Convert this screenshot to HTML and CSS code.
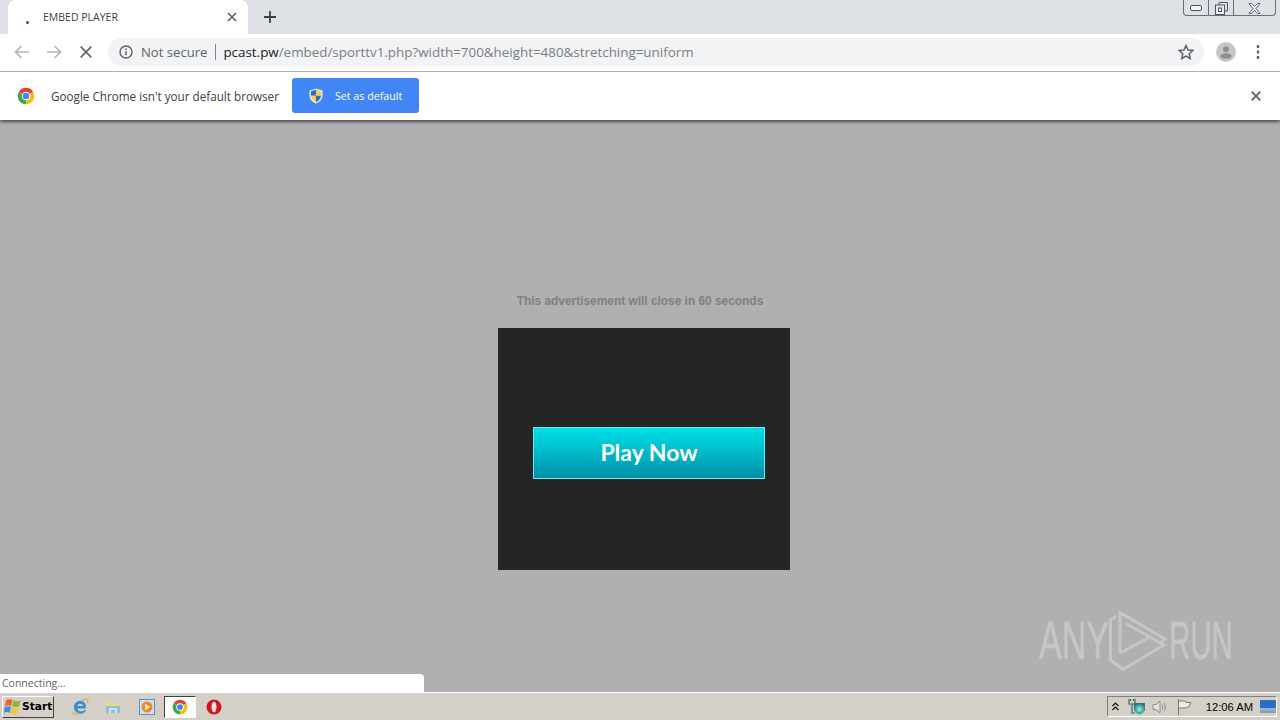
FILE: index.html
```html
<!DOCTYPE html>
<html lang="en">
  <head>
    <meta charset="UTF-8" />
    <title>EMBED PLAYER</title>
    <link rel="stylesheet" href="styles.css">
  </head>

  <body>
    <header class="tabstrip">
      <div class="tab">
        <span class="tab-favicon"></span>
        <span class="tab-title">EMBED PLAYER</span>
        <svg class="tab-close" width="10" height="10" viewBox="0 0 10 10"><path d="M1 1l8 8M9 1l-8 8" stroke="#5f6368" stroke-width="1.7" fill="none"/></svg>
      </div>
      <svg class="new-tab" width="12" height="12" viewBox="0 0 12 12"><path d="M6 0v12M0 6h12" stroke="#3c4043" stroke-width="1.8" fill="none"/></svg>
      <div class="window-controls">
        <span class="win-btn win-min"><svg width="12" height="7" viewBox="0 0 12 7"><rect x="0.5" y="0.5" width="11" height="5" rx="1.5" fill="#f2f4f7" stroke="#4d5660"/></svg></span>
        <span class="win-btn win-max"><svg width="13" height="13" viewBox="0 0 13 13"><path d="M4 3V.5h8.500v8.500H10" fill="none" stroke="#4d5660"/><rect x="0.500" y="3" width="9" height="9.500" fill="#e8ebef" stroke="#4d5660"/><rect x="3.500" y="6" width="3" height="3.500" fill="none" stroke="#4d5660"/></svg></span>
        <span class="win-btn win-close"><svg width="13" height="11" viewBox="0 0 13 11"><path d="M1 .5h2.500l3 3 3-3H12L8 5.500l4 5H9.500l-3-3.300-3 3.300H1l4-5z" fill="#f2f4f7" stroke="#4d5660" stroke-width=".9"/></svg></span>
      </div>
    </header>

    <nav class="toolbar">
      <svg class="nav-icon" width="16" height="14" viewBox="0 0 16 14"><path d="M15 7H2M7.500 1L1.500 7l6 6" stroke="#b4b6b9" stroke-width="1.700" fill="none"/></svg>
      <svg class="nav-icon" width="16" height="14" viewBox="0 0 16 14"><path d="M1 7h13M8.500 1l6 6-6 6" stroke="#b4b6b9" stroke-width="1.700" fill="none"/></svg>
      <svg class="nav-icon" width="12" height="12" viewBox="0 0 12 12"><path d="M.7.700l10.600 10.600M11.300.700L.7 11.300" stroke="#5f6368" stroke-width="1.700" fill="none"/></svg>
      <div class="omnibox">
        <svg width="14" height="14" viewBox="0 0 14 14"><circle cx="7" cy="7" r="6" fill="none" stroke="#5f6368" stroke-width="1.400"/><path d="M7 6.200v4M7 3.500v1.500" stroke="#5f6368" stroke-width="1.500"/></svg>
        <span class="not-secure">Not secure</span>
        <span class="omni-divider"></span>
        <span class="url"><b>pcast.pw</b>/embed/sporttv1.php?width=700&amp;height=480&amp;stretching=uniform</span>
        <svg class="star" width="16" height="16" viewBox="0 0 16 16"><path d="M8 1.500l2 4.500 4.800.5-3.600 3.200 1 4.800L8 12l-4.200 2.500 1-4.800L1.200 6.500 6 6z" fill="none" stroke="#5f6368" stroke-width="1.500"/></svg>
      </div>
      <svg class="avatar" width="20" height="20" viewBox="0 0 20 20"><circle cx="10" cy="10" r="10" fill="#c6c6c6"/><circle cx="10" cy="7.200" r="3" fill="#8e8e8e"/><ellipse cx="10" cy="14" rx="5.800" ry="2.800" fill="#8e8e8e"/></svg>
      <svg class="menu-dots" width="4" height="14" viewBox="0 0 4 14"><path d="M2 0v3M2 5.500v3M2 11v3" stroke="#5f6368" stroke-width="2.400" fill="none"/></svg>
    </nav>

    <div class="infobar">
      <svg class="chrome-icon" width="18" height="18" viewBox="0 0 24 24">
        <path d="M12 12L2.470 6.500A11 11 0 0 1 21.530 6.500Z" fill="#dc4437"/>
        <path d="M12 12L21.530 6.500A11 11 0 0 1 12 23Z" fill="#f4c20d"/>
        <path d="M12 12L12 23A11 11 0 0 1 2.470 6.500Z" fill="#3fa757"/>
        <circle cx="12" cy="12" r="5.600" fill="#fff"/>
        <circle cx="12" cy="12" r="4.300" fill="#4285f4"/>
      </svg>
      <span class="infobar-text">Google Chrome isn't your default browser</span>
      <button class="set-default">
        <svg width="14" height="16" viewBox="0 0 14 16">
          <path d="M7 .5l6.500 2v5c0 4-3 6.700-6.500 8-3.500-1.300-6.500-4-6.500-8v-5z" fill="#dfe6ef"/>
          <path d="M7 1.800v6H2V3.300z" fill="#2f69c9"/>
          <path d="M7 1.800l5 1.500v4.500H7z" fill="#f5d33a"/>
          <path d="M2 7.800h5v6.300C4.500 13 2.300 10.800 2 7.800z" fill="#f5d33a"/>
          <path d="M7 7.800h5c-.3 3-2.500 5.200-5 6.300z" fill="#2f69c9"/>
        </svg>
        <span>Set as default</span>
      </button>
      <svg class="infobar-close" width="10" height="10" viewBox="0 0 10 10"><path d="M.7.700l8.600 8.600M9.300.700L.7 9.300" stroke="#5f6368" stroke-width="1.800" fill="none"/></svg>
    </div>

    <main class="page">
      <p class="ad-note">This advertisement will close in 60 seconds</p>
      <div class="ad">
        <a class="play-now">Play Now</a>
      </div>

      <div class="status-bubble">Connecting...</div>

      <div class="watermark">
        <span class="wm-word wm-any">ANY</span>
        <svg class="wm-logo" width="58" height="61" viewBox="0 0 58 61" fill="none" stroke="#c6c6c6" stroke-width="3">
          <path d="M7 6L1.500 10V50L12 58"/>
          <path d="M11 43V2.500L56 29 52 32"/>
          <path d="M11 43L41 27"/>
          <path d="M17 13.500L55 35 14 59.500 10 56"/>
        </svg>
        <span class="wm-word wm-run">RUN</span>
      </div>
    </main>

    <footer class="taskbar">
      <button class="start-btn">
        <svg width="17" height="17" viewBox="0 0 17 17">
          <path d="M2 2.500C4 .8 6.500.8 8.500 2L7.300 8C5.300 6.800 3 6.800.8 8.300z" fill="#e8662a"/>
          <path d="M9.500 2.300c2 1.200 4.300 1.200 6.700.2L15 8.200c-2.300 1.200-4.600 1.200-6.700 0z" fill="#86b83c"/>
          <path d="M.6 9.300C3 7.800 5.200 7.800 7 9l-1.200 6C4 13.800 1.800 13.800 0 15z" fill="#3c8fdc"/>
          <path d="M8 9.200c2.200 1.200 4.500 1.200 6.800 0l-1.200 5.800c-2.300 1.200-4.600 1.200-6.800 0z" fill="#f7c52c"/>
        </svg>
        <span>Start</span>
      </button>
      <div class="quicklaunch">
        <svg width="18" height="18" viewBox="0 0 18 18">
          <path d="M14.500 10.500H6.500c.2 3 4.500 4 6.500 1.500h2c-1.500 4-7 5-10 2-3-3-2.500-8 .5-10 3.500-2.500 8.500-1 9.500 3.500zM6.500 8h5.500C11.500 5 7 5 6.500 8z" fill="#2f8fdc"/>
          <path d="M3 13.500C.5 17 3.500 17.500 8 15M11 3c4-2.800 7-2.500 5.500 2" fill="none" stroke="#e0b23a" stroke-width="1.300"/>
        </svg>
        <svg width="16" height="16" viewBox="1 0 16 16">
          <path d="M1 3h5l1 2h7v9H1z" fill="#efd884"/>
          <path d="M1 7h14v7H1z" fill="#8ec1d8"/>
          <path d="M5 14v-4h6v4" fill="none" stroke="#e9f2f6" stroke-width="1.500"/>
        </svg>
        <svg width="16" height="16" viewBox="0 0 16 16">
          <rect x=".5" y=".5" width="15" height="15" fill="#cfe0f4" stroke="#5d8cc9"/>
          <circle cx="8" cy="8" r="5.500" fill="#f08c1e"/>
          <path d="M6.300 5v6L11 8z" fill="#fff"/>
        </svg>
        <span class="task-active">
          <svg width="16" height="16" viewBox="0 0 24 24">
            <path d="M12 12L2.470 6.500A11 11 0 0 1 21.530 6.500Z" fill="#dc4437"/>
            <path d="M12 12L21.530 6.500A11 11 0 0 1 12 23Z" fill="#f4c20d"/>
            <path d="M12 12L12 23A11 11 0 0 1 2.470 6.500Z" fill="#3fa757"/>
            <circle cx="12" cy="12" r="5.600" fill="#fff"/>
            <circle cx="12" cy="12" r="4.300" fill="#4285f4"/>
          </svg>
        </span>
        <svg width="16" height="16" viewBox="0 0 16 16">
          <circle cx="8" cy="8" r="7.500" fill="#c8181f"/>
          <ellipse cx="8" cy="8" rx="2.500" ry="5.400" fill="#f6dede"/>
        </svg>
      </div>
      <div class="tray">
        <svg width="7" height="9" viewBox="0 0 7 9"><path d="M.5 4l3-3 3 3M.5 8l3-3 3 3" fill="none" stroke="#111" stroke-width="1.200"/></svg>
        <svg class="tray-net" width="18" height="18" viewBox="0 0 18 18">
          <path d="M1 1v5h6V1M2.500 1v2M5.500 1v2M4 6v9h3" fill="none" stroke="#3f6b52" stroke-width="1.200"/>
          <rect x="6" y="5" width="11" height="8" fill="#3a6f7c"/>
          <circle cx="11.500" cy="11.500" r="5" fill="#3fb3a8"/>
          <circle cx="11.500" cy="11.500" r="2.500" fill="#86d8cd"/>
        </svg>
        <svg class="tray-vol" width="16" height="16" viewBox="0 0 16 16" fill="none" stroke="#8d8d8d">
          <path d="M1 5.500h3L8 2v12L4 10.500H1z" fill="#e2e2e2"/>
          <path d="M10 5.500c1 1.500 1 3.500 0 5M12 4c1.800 2.500 1.800 5.500 0 8"/>
        </svg>
        <svg class="tray-flag" width="15" height="16" viewBox="0 0 15 16" fill="none" stroke="#777"><path d="M1.500 0v16M2 2h6l1 1.500h5L11.500 8 8 9H2" fill="#eeece6"/></svg>
        <span class="clock">12:06 AM</span>
        <svg width="16" height="13" viewBox="0 0 16 13"><rect width="16" height="11" fill="#2b6fc4"/><rect y="8" width="16" height="3" fill="#86b4e4"/><rect y="11" width="16" height="2" fill="#9a9a9a"/></svg>
      </div>
    </footer>
  </body>
</html>
```

FILE: styles.css
```css
* {
  margin: 0;
  padding: 0;
  box-sizing: border-box;
}

body {
  height: 720px;
  width: 1280px;
  overflow: hidden;
  display: flex;
  flex-direction: column;
  font-family: "Open Sans", sans-serif;
  background-color: #b0b0b0;
}

.tabstrip {
  height: 34px;
  display: flex;
  align-items: flex-start;
  background-color: #dee1e6;
  padding-left: 8px;
}

.tab {
  position: relative;
  width: 240px;
  height: 34px;
  display: flex;
  align-items: center;
  background-color: white;
  border-radius: 8px 8px 0 0;
  padding: 0 11px 0 35px;
}

.tab-favicon {
  position: absolute;
  left: 18px;
  top: 21px;
  width: 3px;
  height: 3px;
  border-radius: 50%;
  background-color: #2a4f9c;
}

.tab-title {
  flex: 1;
  font-size: 10.500px;
  color: #3c4043;
}

.new-tab {
  margin: 11px 0 0 16px;
}

.window-controls {
  margin-left: auto;
  margin-right: 4px;
  width: 93px;
  height: 16px;
  display: flex;
  border: 1px solid #66707a;
  border-top: 0;
  border-radius: 0 0 4px 4px;
}

.win-btn {
  display: flex;
  align-items: center;
  justify-content: center;
  border-right: 1px solid #66707a;
}

.win-btn svg {
  margin-top: 1px;
}

.win-min {
  width: 25px;
}

.win-max {
  width: 25px;
}

.win-close {
  flex: 1;
  border-right: 0;
}

.toolbar {
  height: 38px;
  display: flex;
  align-items: center;
  background-color: white;
  border-bottom: 1px solid #b4b4b4;
  padding: 0 0 1px 14px;
}

.nav-icon {
  margin-right: 16px;
}

.nav-icon:nth-child(3) {
  margin: 0 16px 0 2px;
}

.omnibox {
  width: 1096px;
  height: 28px;
  display: flex;
  align-items: center;
  padding: 0 10px 0 11px;
  border-radius: 14px;
  background-color: #f1f3f4;
}

.not-secure {
  margin-left: 8px;
  font-size: 13.100px;
  color: #5f6368;
}

.omni-divider {
  width: 1px;
  height: 16px;
  margin: 0 7px 0 8px;
  background-color: #80868b;
}

.url {
  flex: 1;
  font-size: 13.400px;
  color: #7a7e83;
}

.url b {
  font-weight: 400;
  color: #202124;
}

.avatar {
  margin-left: 12px;
}

.menu-dots {
  margin-left: 20px;
}

.infobar {
  position: relative;
  z-index: 2;
  height: 48px;
  display: flex;
  align-items: center;
  background-color: white;
  padding-left: 17px;
  box-shadow: 0 2px 3px rgba(0, 0, 0, 0.55);
}

.infobar-text {
  margin: 0 0 1px 16px;
  font-size: 11.700px;
  color: #3c4043;
}

.set-default {
  width: 127px;
  height: 35px;
  display: flex;
  align-items: center;
  gap: 12px;
  margin: 0 0 1px 13px;
  padding-left: 17px;
  border: 0;
  border-radius: 3px;
  background-color: #4285f4;
  color: white;
  font-family: inherit;
  font-size: 10.700px;
}

.infobar-close {
  margin-left: auto;
  margin-right: 19px;
}

.page {
  position: relative;
  flex: 1;
  padding-top: 174px;
  background-color: #b0b0b0;
}

.ad-note {
  height: 14px;
  line-height: 14px;
  text-align: center;
  font-family: "Liberation Sans", sans-serif;
  font-size: 11.900px;
  font-weight: bold;
  color: #808080;
}

.ad {
  width: 292px;
  height: 242px;
  margin: 20px 0 0 498px;
  padding: 8px 0 0 35px;
  display: flex;
  align-items: center;
  background-color: #252525;
}

.play-now {
  width: 232px;
  height: 52px;
  display: flex;
  align-items: center;
  justify-content: center;
  padding-bottom: 3px;
  border: 1px solid #5ff0f5;
  background-image: linear-gradient(to bottom, #00e0e8, #0090a8);
  color: white;
  font-family: "Lato", sans-serif;
  font-size: 23px;
  font-weight: bold;
}

.status-bubble {
  position: absolute;
  left: 0;
  bottom: 0;
  width: 424px;
  height: 18px;
  padding-left: 2px;
  line-height: 18px;
  font-size: 10.500px;
  color: #5f6368;
  background-color: white;
  border-top-right-radius: 4px;
}

.watermark {
  position: absolute;
  left: 1039px;
  top: 490px;
  display: flex;
  align-items: center;
  gap: 8px;
}

.wm-word {
  width: 62px;
  font-family: "Liberation Sans", sans-serif;
  font-size: 54px;
  line-height: 61px;
  color: #c6c6c6;
  -webkit-text-stroke: 0.6px #c6c6c6;
  transform-origin: left center;
  white-space: nowrap;
}

.wm-any {
  transform: scaleX(0.63);
}

.wm-run {
  margin-left: -6px;
  transform: scaleX(0.545);
}

.taskbar {
  height: 28px;
  display: flex;
  align-items: center;
  background-color: #d4d0c8;
  border-top: 1px solid white;
  padding-left: 2px;
}

.start-btn {
  width: 52px;
  height: 22px;
  display: flex;
  align-items: center;
  gap: 1px;
  padding-left: 1px;
  border: 1px solid;
  border-color: white #404040 #404040 white;
  background-color: #d4d0c8;
  font-family: "DejaVu Sans", sans-serif;
  font-size: 10.700px;
  font-weight: bold;
  color: black;
}

.quicklaunch {
  display: flex;
  align-items: center;
  gap: 17px;
  margin-left: 17px;
}

.task-active {
  width: 32px;
  height: 22px;
  display: flex;
  align-items: center;
  justify-content: center;
  margin: 0 -7px 0 -8px;
  background-color: white;
  border: 1px solid;
  border-color: #404040 white white #404040;
}

.tray {
  width: 170px;
  height: 21px;
  margin-left: auto;
  margin-right: 3px;
  display: flex;
  align-items: center;
  gap: 8px;
  padding-left: 4px;
  border: 1px solid;
  border-color: #808080 white white #808080;
}

.tray-net {
  margin-left: 1px;
}

.tray-vol {
  margin-left: -2px;
}

.tray-flag {
  margin-left: 1px;
}

.clock {
  margin: 0 -1px 0 6px;
  font-family: "Liberation Sans", sans-serif;
  font-size: 11.200px;
  color: black;
  white-space: nowrap;
}
```
